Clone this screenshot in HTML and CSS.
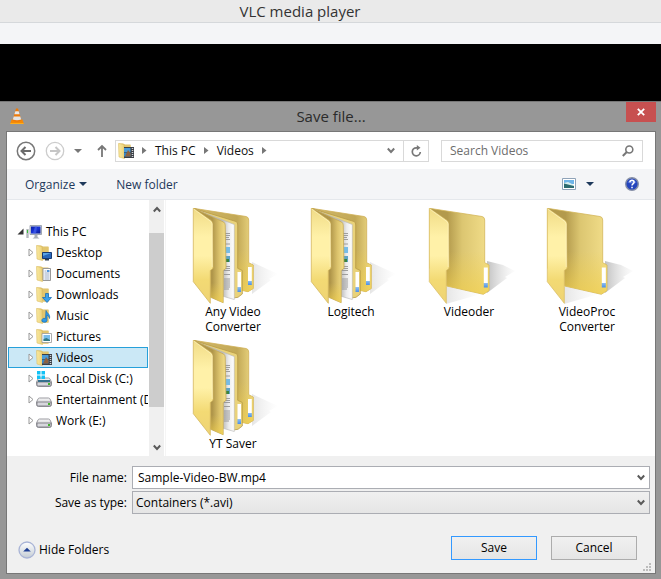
FILE: index.html
```html
<!DOCTYPE html>
<html lang="en">
<head>
<meta charset="utf-8">
<title>VLC media player</title>
<link rel="stylesheet" href="styles.css">
</head>
<body>
<svg class="defs" aria-hidden="true">
  <defs>
    <linearGradient id="gFlap" x1="0" y1="0" x2="0" y2="1"><stop offset="0" stop-color="#f0db86"/><stop offset=".3" stop-color="#fff1a8"/><stop offset=".5" stop-color="#fff1a8"/><stop offset=".75" stop-color="#f3da74"/><stop offset="1" stop-color="#eed374"/></linearGradient>
    <linearGradient id="gMid" x1="0" y1="0" x2="1" y2="0"><stop offset=".58" stop-color="#b0964a"/><stop offset=".8" stop-color="#dcc36c"/><stop offset="1" stop-color="#f4e08c"/></linearGradient>
    <linearGradient id="gBack" x1="0" y1="0" x2="1" y2="0"><stop offset=".3" stop-color="#b39a4c"/><stop offset=".55" stop-color="#dcc671"/><stop offset="1" stop-color="#f3df8b"/></linearGradient>
    <linearGradient id="gRear" x1="0" y1="0" x2="1" y2="0"><stop offset=".2" stop-color="#cdb465"/><stop offset=".73" stop-color="#c2a856"/><stop offset="1" stop-color="#f0db85"/></linearGradient>
    <linearGradient id="gGlow" x1="0" y1="0" x2="0" y2="1"><stop offset=".5" stop-color="#f0cf4d" stop-opacity="0"/><stop offset="1" stop-color="#f0cf4d" stop-opacity=".7"/></linearGradient>
    <linearGradient id="gShadow" x1="0" y1="0" x2="1" y2="0"><stop offset="0" stop-color="#999" stop-opacity=".6"/><stop offset="1" stop-color="#ccc" stop-opacity=".05"/></linearGradient>
    <linearGradient id="gSoft" x1="0" y1="0" x2="1" y2="0"><stop offset="0" stop-color="#aaa" stop-opacity=".3"/><stop offset="1" stop-color="#ccc" stop-opacity="0"/></linearGradient>
    <linearGradient id="gPaper" x1="0" y1="0" x2="1" y2="0"><stop offset=".7" stop-color="#bdbdbd"/><stop offset=".85" stop-color="#ececec"/><stop offset="1" stop-color="#fff"/></linearGradient>
    <linearGradient id="gTag" x1="0" y1="0" x2="0" y2="1"><stop offset=".75" stop-color="#fff"/><stop offset=".76" stop-color="#8fc0f5"/><stop offset="1" stop-color="#4c8fe6"/></linearGradient>
    <linearGradient id="gSmall" x1="0" y1="0" x2="1" y2="0"><stop offset="0" stop-color="#f9e9a0"/><stop offset="1" stop-color="#ecd27a"/></linearGradient>
    <linearGradient id="gDrive" x1="0" y1="0" x2="0" y2="1"><stop offset="0" stop-color="#fafafa"/><stop offset="1" stop-color="#b4b4ba"/></linearGradient>
    <linearGradient id="gScreen" x1="0" y1="0" x2="1" y2="1"><stop offset="0" stop-color="#0a1fa8"/><stop offset=".5" stop-color="#1a35d8"/><stop offset="1" stop-color="#0b1a8c"/></linearGradient>
    <linearGradient id="gRound" x1="0" y1="0" x2="0" y2="1"><stop offset="0" stop-color="#fff"/><stop offset="1" stop-color="#c4ccd4"/></linearGradient>
  </defs>
  <symbol id="chev" viewBox="0 0 8 7"><path d="M.8 1.500 4 5 7.200 1.500" fill="none" stroke="currentColor" stroke-width="2"/></symbol>
  <symbol id="crumb" viewBox="0 0 5 7"><path d="M0 0v7l4.500-3.500z" fill="currentColor"/></symbol>
  <symbol id="down" viewBox="0 0 8 4"><path d="M0 0h8L4 4z" fill="currentColor"/></symbol>
  <symbol id="twist" viewBox="0 0 6 9"><path d="M1 1v7l4-3.500z" fill="#fff" stroke="#989898"/></symbol>
  <symbol id="small" viewBox="0 0 16 16"><path d="M1 .5h4l2 1h5.500v13H7L1 13z" fill="#ddc069"/><path d="M.5.500 6 1.500l.5 14L1 14z" fill="url(#gSmall)" stroke="#dbbd63" stroke-width=".6"/><path d="M7 2h5.500v12.500H7z" fill="#e2c56d"/></symbol>
  <symbol id="film" viewBox="0 0 10 11"><path d="M0 0h10v11H0z" fill="#3b3f45"/><path d="M0 1h6.500v4H0z" fill="#4a9bd8"/><path d="M0 5.500h6.500v4H0z" fill="#3686c6"/><path d="M1 9.500 4 3l2.500 3v3.500z" fill="#8d6240"/><path d="M8.500 1v10" stroke="#cfd3d8" stroke-width="1.500" stroke-dasharray="1 1"/></symbol>
  <symbol id="drive" viewBox="0 0 16 10"><path d="M3.500 1h9q1 0 1.500 1l1.500 3v2.500q0 2-2 2h-11q-2 0-2-2V5L2 2q.5-1 1.500-1z" fill="url(#gDrive)" stroke="#9a9aa0"/><path d="M1 5h14v2.500q0 1.500-1.500 1.500h-11Q1 9 1 7.500z" fill="#d7d7dd" stroke="#7d7d85" stroke-width=".9"/><path d="M12 6h2v2h-2z" fill="#43b52c"/></symbol>
  <symbol id="folder" viewBox="0 0 96 96">
    <path d="M66 53 82 57 94 63 84 69 86 70 66 85z" fill="url(#gShadow)"/>
    <path d="M25 77 60 86 25 96z" fill="url(#gSoft)"/>
    <path d="M8.500.3 61 8.500Q63.700 9 63.700 12V54.700L68 57V82.700L62.300 86.300 25.700 78 8.500 60z" fill="url(#gBack)" stroke="#d3b65a" stroke-width=".8"/>
    <path d="M8.500.3 61 8.500Q63.700 9 63.700 12V54.700L68 57V82.700L62.300 86.300 25.700 78 8.500 60z" fill="url(#gGlow)"/>
    <path d="M62.800 59.500h4v20h-4z" fill="url(#gTag)"/>
    <path d="M8.300.3 26 12.500Q27.500 13.500 27.500 16L28 60.300 25.300 62.500V95.300L8.300 73.700z" fill="url(#gFlap)" stroke="#dcc06a" stroke-width=".8"/>
    <path d="M8.700 1 26 13.500 27.200 16V59" fill="none" stroke="#fff6c4" stroke-width=".7"/>
  </symbol>
  <symbol id="folderFull" viewBox="0 0 96 96">
    <path d="M67 54 93 66 84 71 86 72 67 86z" fill="url(#gSoft)"/>
    <path d="M8.500.3 61 8.500Q63.700 9 63.700 12V54.700L68.300 57V80.500L63 83.700 50 81 30 20z" fill="url(#gRear)" stroke="#cfb057" stroke-width=".8"/>
    <path d="M8.500.3 61 8.500Q63.700 9 63.700 12V54.700L68.300 57V80.500L63 83.700 50 81 30 20z" fill="url(#gGlow)"/>
    <path d="M63 59h3.800v18H63z" fill="url(#gTag)"/>
    <path d="M9 .5 51 13.500Q52.700 14 52.700 17V60.300L57.300 62.500V86L53 89.300 48 90 40 20z" fill="#e9d27a" stroke="#b89b46" stroke-width=".8"/>
    <path d="M52.500 64H56v20h-3.500z" fill="url(#gTag)"/>
    <path d="M12 2 49.300 16.500V91.500L37 88V18z" fill="url(#gPaper)" stroke="#b5b5b5" stroke-width=".6"/>
    <path d="M39 25.500h6M39 27.500h6M39 29.500h5M39 31.500h6M39 36h6M39 58.500h6M39 60.500h6M39 62.500h6M39 66.500h6M39 71h6M39 73h6M39 75h6M39 77h6M39 79h6M39 81h5" stroke="#8c8c8c" stroke-width=".8"/>
    <path d="M40 39h5v6h-5z" fill="#77bce6"/><path d="M40 48h5v6h-5z" fill="#5fa4c4"/><path d="M41 51h3v3h-3z" fill="#39833f"/>
    <path d="M8.500.3 38.500 14Q40 15 40.200 17L41 60.300 38.200 62.500V94.700L25 89V14z" fill="url(#gMid)" stroke="#c6a953" stroke-width=".8"/>
    <path d="M26 55V89l12 5.700V62.500L41 60.300V55z" fill="url(#gGlow)"/>
    <path d="M8.300.3 26 12.500Q27.500 13.500 27.500 16L28 60.300 25.300 62.500V95.300L8.300 73.700z" fill="url(#gFlap)" stroke="#d4b75f" stroke-width=".8"/>
    <path d="M8.700 1 26 13.500 27.200 16V59" fill="none" stroke="#fff6c4" stroke-width=".7"/>
  </symbol>
</svg>

<header class="player-title">VLC media player</header>
<div class="player-menu"></div>
<div class="player-screen"></div>

<main class="dialog">
  <div class="dialog-title">
    <svg class="cone" viewBox="0 0 14 16"><path d="M1.500 11.500h11l1.300 4.200H.2z" fill="#f58a07"/><path d="M.4 15h13.200v1H.2z" fill="#ffae1c"/><path d="M6 .5h2l3.500 12Q7 15 2.500 12.500z" fill="#ee7a08"/><path d="M5.300 3.200h3.400l.9 3H4.400z" fill="#e9e9e9"/><path d="M3.700 8.500h6.600l.9 2.900Q7 13 2.800 11.400z" fill="#e4e4e4"/></svg>
    <h1>Save file...</h1>
    <button class="close" aria-label="Close"><svg viewBox="0 0 8 8"><path d="M.8.800 7.200 7.200M7.200.800.800 7.200" stroke="#fff" stroke-width="1.800"/></svg></button>
  </div>

  <div class="panel">
    <nav class="address-row" aria-label="Location">
      <button class="round" aria-label="Back"><svg viewBox="0 0 20 20"><circle cx="10" cy="10" r="8.700" fill="none" stroke="#777" stroke-width="1.500"/><path d="M15 10H6M9.500 6 5.500 10l4 4" fill="none" stroke="#6b6b6b" stroke-width="2"/></svg></button>
      <button class="round" aria-label="Forward"><svg viewBox="0 0 20 20"><circle cx="10" cy="10" r="8.700" fill="none" stroke="#ccc" stroke-width="1.300"/><path d="M5 10h9M10.500 6l4 4-4 4" fill="none" stroke="#c6c6c6" stroke-width="2"/></svg></button>
      <button class="recent" aria-label="Recent locations"><svg class="down"><use href="#down"/></svg></button>
      <button class="up" aria-label="Up"><svg viewBox="0 0 10 13"><path d="M5 13V2M1 6l4-4 4 4" fill="none" stroke="#777" stroke-width="1.800"/></svg></button>
      <div class="address">
        <svg class="ico" viewBox="0 0 16 16"><use href="#small" width="16" height="16"/><use href="#film" x="6" y="4" width="10" height="11"/></svg>
        <svg class="crumb"><use href="#crumb"/></svg><a href="#">This PC</a>
        <svg class="crumb"><use href="#crumb"/></svg><a href="#">Videos</a>
        <svg class="crumb"><use href="#crumb"/></svg>
        <button class="history" aria-label="Previous locations"><svg class="chev"><use href="#chev"/></svg></button>
        <button class="refresh" aria-label="Refresh"><svg viewBox="0 0 11 12"><path d="M6.500 2.800H5.300A4 4 0 1 0 9.300 7" fill="none" stroke="#777" stroke-width="1.700"/><path d="M5.800 0v5.600L9.500 2.800z" fill="#777"/></svg></button>
      </div>
      <div class="search">
        <input type="search" placeholder="Search Videos" aria-label="Search Videos">
        <svg viewBox="0 0 12 12"><circle cx="7.300" cy="4.500" r="3.500" fill="none" stroke="#777" stroke-width="1.600"/><path d="M4.800 7 .8 11" stroke="#777" stroke-width="2"/></svg>
      </div>
    </nav>

    <div class="toolbar">
      <button class="organize">Organize <svg class="down"><use href="#down"/></svg></button>
      <button>New folder</button>
      <button class="view" aria-label="Change your view"><svg class="pic" viewBox="0 0 14 12"><path d="M.5.500h13v11H.5z" fill="#fff" stroke="#8fa3b8"/><path d="M2 2h10v4H2z" fill="#6db4e8"/><path d="M2 5 6 4l6 3v1H2z" fill="#d8efee"/><path d="M2 5.500 12 8v2H2z" fill="#2c6b70"/></svg></button>
      <button aria-label="More options"><svg class="down"><use href="#down"/></svg></button>
      <button class="help" aria-label="Help"><svg viewBox="0 0 14 14"><circle cx="7" cy="7" r="6.300" fill="#2445bd" stroke="#8790a6" stroke-width="1.400"/><path d="M2.500 5.500a5 5 0 0 1 9 0Q7 7.500 2.500 5.500z" fill="#6f8de6" opacity=".7"/><path d="M4.900 5.300Q5 3.300 7 3.300T9.100 5.200C9.100 6.600 7 6.600 7 8.500M7 9.700v1.600" fill="none" stroke="#fff" stroke-width="1.500"/></svg></button>
    </div>

    <div class="browser">
      <div class="tree-pane">
        <ul class="tree">
          <li class="root"><svg class="open" viewBox="0 0 7 7"><path d="M6.500.5v6h-6z" fill="#333"/></svg><svg class="ico" viewBox="0 0 16 16"><path d="M.3 5h2.400v9H.3z" fill="#b5b9be"/><path d="M1 6h1v3H1z" fill="#39c239"/><path d="M4 1.500h11.500v9H4z" fill="#cfd5dd" stroke="#8d96a3" stroke-width=".8"/><path d="M5 2.500h9.500v7H5z" fill="url(#gScreen)"/><path d="M9 2.500h2l-1 7H7z" fill="#4f6af0" opacity=".6"/><path d="M8.500 11h3v2l2 1.500h-7l2-1.500z" fill="#a9afb8"/></svg>This PC</li>
          <li><svg class="twist"><use href="#twist"/></svg><svg class="ico" viewBox="0 0 16 16"><use href="#small" width="16" height="16"/><path d="M6.500 7.500h9v6h-9z" fill="#2867ba" stroke="#173a73"/><path d="M7 8h8L7 11z" fill="#5ba5e6"/><path d="M9 14h4v1.500H9z" fill="#2b3c55"/></svg>Desktop</li>
          <li><svg class="twist"><use href="#twist"/></svg><svg class="ico" viewBox="0 0 16 16"><use href="#small" width="16" height="16"/><path d="M7 2.500h7.500v12H7z" fill="#fff" stroke="#999"/><path d="M8.500 5h2M8.500 7h5M8.500 9h5M8.500 11h5M8.500 13h5" stroke="#7b93b8" stroke-width=".8"/><path d="M11 4h2.500v2H11z" fill="#4e95dd"/></svg>Documents</li>
          <li><svg class="twist"><use href="#twist"/></svg><svg class="ico" viewBox="0 0 16 16"><use href="#small" width="16" height="16"/><path d="M9.500 6.500h3v4h3l-4.500 5-4.500-5h3z" fill="#3aa1ec" stroke="#1c6fb8" stroke-width=".8"/></svg>Downloads</li>
          <li><svg class="twist"><use href="#twist"/></svg><svg class="ico" viewBox="0 0 16 16"><use href="#small" width="16" height="16"/><path d="M10 2.500c1 3 4.500 3.500 3.500 8-.5-2-1.500-3-2.500-3.500v5.500a2.600 2 0 1 1-1.500-2z" fill="#2e9ae8" stroke="#1b6fb5" stroke-width=".7"/></svg>Music</li>
          <li><svg class="twist"><use href="#twist"/></svg><svg class="ico" viewBox="0 0 16 16"><use href="#small" width="16" height="16"/><path d="M6 4.500h9.500v9H6z" fill="#fff" stroke="#999" stroke-width=".8"/><path d="M7.500 6h6.500v6H7.500z" fill="#79bdeb"/><path d="M7.500 10l3-1 3.500 2v1H7.500z" fill="#327b86"/></svg>Pictures</li>
          <li class="selected"><svg class="twist"><use href="#twist"/></svg><svg class="ico" viewBox="0 0 16 16"><use href="#small" width="16" height="16"/><use href="#film" x="6" y="4" width="10" height="11"/></svg>Videos</li>
          <li><svg class="twist"><use href="#twist"/></svg><svg class="ico" viewBox="0 0 16 16"><use href="#drive" y="6" width="16" height="10"/><path d="M2 9h12v2H2z" fill="#35708c"/><path d="M1 0h3.500v3.500H1zM5.500 0H9v3.500H5.500zM1 4.500h3.500V8H1zM5.500 4.500H9V8H5.500z" fill="#12c1f5"/></svg>Local Disk (C:)</li>
          <li><svg class="twist"><use href="#twist"/></svg><svg class="ico" viewBox="0 0 16 16"><use href="#drive" y="5" width="16" height="10"/></svg>Entertainment (D:)</li>
          <li><svg class="twist"><use href="#twist"/></svg><svg class="ico" viewBox="0 0 16 16"><use href="#drive" y="5" width="16" height="10"/></svg>Work (E:)</li>
          <li class="network"><svg class="globe" viewBox="0 0 10 10"><circle cx="5" cy="5" r="4.500" fill="#3c7fc4"/><path d="M3 1h3L5 3z" fill="#51ab6b"/></svg></li>
        </ul>
        <div class="scrollbar">
          <svg class="chev flip"><use href="#chev"/></svg>
          <div class="thumb"></div>
          <svg class="chev"><use href="#chev"/></svg>
        </div>
      </div>
      <ul class="files">
        <li><svg class="big"><use href="#folderFull"/></svg><span>Any Video Converter</span></li>
        <li><svg class="big"><use href="#folderFull"/></svg><span>Logitech</span></li>
        <li><svg class="big"><use href="#folder"/></svg><span>Videoder</span></li>
        <li><svg class="big"><use href="#folder"/></svg><span>VideoProc Converter</span></li>
        <li><svg class="big"><use href="#folderFull"/></svg><span>YT Saver</span></li>
      </ul>
    </div>

    <form class="fields">
      <label for="name">File name:</label>
      <div class="combo"><input id="name" type="text" value="Sample-Video-BW.mp4"><svg class="chev"><use href="#chev"/></svg></div>
      <label for="type">Save as type:</label>
      <div class="combo"><select id="type"><option>Containers (*.avi)</option></select><svg class="chev"><use href="#chev"/></svg></div>
    </form>

    <footer class="actions">
      <button class="hide"><svg viewBox="0 0 18 18"><circle cx="9" cy="9" r="8" fill="url(#gRound)" stroke="#a9b4d6" stroke-width="1.300"/><path d="M5.200 10.500h7.600L9 6.700z" fill="#1f3f94"/></svg>Hide Folders</button>
      <button class="push primary">Save</button>
      <button class="push">Cancel</button>
      <svg class="grip" viewBox="0 0 9 9"><path d="M6 0h2v2H6zM3 3h2v2H3zM6 3h2v2H6zM0 6h2v2H0zM3 6h2v2H3zM6 6h2v2H6z" fill="#bcbcbc"/></svg>
    </footer>
  </div>
</main>
</body>
</html>
```

FILE: styles.css
```css
* { box-sizing: border-box; }

body {
  margin: 0;
  min-height: 100vh;
  display: flex;
  flex-direction: column;
  background: #979797;
  color: #000;
  font: 12px/15px "Open Sans", "Noto Sans", sans-serif;
}

svg { display: block; flex: none; }
.defs { position: absolute; width: 0; height: 0; }
ul { list-style: none; margin: 0; padding: 0; }

button {
  display: flex;
  align-items: center;
  padding: 0;
  border: 0;
  background: none;
  color: inherit;
  font: inherit;
}

input, select {
  min-width: 0;
  border: 0;
  padding: 0;
  background: none;
  color: inherit;
  font: inherit;
  outline: 0;
}

.ico { width: 16px; height: 16px; }
.chev { width: 8px; height: 7px; color: #5a5a5a; }
.flip { transform: rotate(180deg); }
.down { width: 8px; height: 4px; }
.crumb { width: 5px; height: 7px; color: #777; }
.twist { width: 6px; height: 9px; }

/* Player window behind the dialog */
.player-title {
  height: 23px;
  padding-right: 61px;
  background: #eaeaea;
  border-bottom: 1px solid #d5d8db;
  color: #333;
  font-size: 15px;
  line-height: 23px;
  text-align: center;
}
.player-menu { height: 21px; background: #f4f5f7; }
.player-screen { height: 57px; background: #000; }

/* Dialog frame */
.dialog {
  flex: 1;
  display: flex;
  flex-direction: column;
  padding: 0 5px 5px 6px;
  border-top: 1px solid #777;
}
.dialog-title {
  display: grid;
  grid-template-columns: 30px 1fr 30px;
  height: 29px;
}
.cone { width: 14px; height: 16px; margin: 6px 0 0 4px; }
.dialog-title h1 {
  margin: 0;
  color: #2b2b2b;
  font-size: 15px;
  font-weight: 400;
  line-height: 29px;
  text-align: center;
}
.close {
  height: 20px;
  justify-content: center;
  background: #c75050;
}
.close svg { width: 8px; height: 8px; }

.panel {
  flex: 1;
  display: flex;
  flex-direction: column;
  border: 1px solid #777;
  background: #f0f0f0;
}

/* Address bar */
.address-row {
  display: flex;
  align-items: center;
  height: 37px;
  padding: 0 12px 0 9px;
  background: #fff;
}
.round { margin-right: 9px; }
.round svg { width: 20px; height: 20px; }
.recent { color: #777; margin-right: 15px; }
.up { margin-right: 8px; }
.up svg { width: 10px; height: 13px; }
.address, .search {
  display: flex;
  align-items: center;
  height: 22px;
  min-width: 0;
  border: 1px solid #d9d9d9;
}
.address { flex: 314 1 0; padding-left: 2px; margin-right: 12px; }
.address .crumb { margin: 0 8px; }
.address a { color: #111; text-decoration: none; }
.address .history { margin: 0 8px 0 auto; }
.address .history .chev { color: #777; }
.refresh {
  width: 25px;
  height: 20px;
  justify-content: center;
  border-left: 1px solid #d9d9d9;
}
.refresh svg { width: 11px; height: 12px; }
.search { flex: 0 1 202px; padding: 0 8px; }
.search input { flex: 1; appearance: none; }
.search input::placeholder { color: #6d6d6d; opacity: 1; }
.search svg { width: 12px; height: 12px; }

/* Toolbar */
.toolbar {
  display: flex;
  align-items: center;
  height: 31px;
  padding: 0 16px 0 18px;
  background: #f4f5f7;
  border-bottom: 1px solid #e5e8ec;
  color: #1e395b;
}
.organize { gap: 4px; margin-right: 29px; }
.view { margin: 0 10px 0 auto; }
.pic { width: 14px; height: 12px; }
.help { margin-left: 31px; }
.help svg { width: 14px; height: 14px; }

/* Folder tree and file list */
.browser {
  display: grid;
  grid-template-columns: 159px 1fr;
  height: 256px;
  background: #fff;
}
.tree-pane {
  display: grid;
  grid-template-columns: 1fr 15px;
  min-height: 0;
  padding-right: 1px;
  border-right: 1px solid #f5f5f5;
}
.tree { overflow: hidden; padding: 21px 1px 0 1px; }
.tree li {
  display: flex;
  align-items: center;
  height: 21px;
  padding-left: 20px;
  white-space: nowrap;
  overflow: hidden;
}
.tree .ico { margin: 0 4px 0 2px; }
.tree .root { padding-left: 9px; }
.tree .open { width: 7px; height: 7px; }
.tree .selected {
  padding-left: 19px;
  border: 1px solid #26a0da;
  background: #cbe8f6;
}
.tree .network { margin-top: 21px; }
.globe { width: 10px; height: 10px; }

.scrollbar {
  display: flex;
  flex-direction: column;
  align-items: center;
  padding: 6px 0 5px;
  background: #f0f0f0;
}
.thumb {
  flex: none;
  width: 100%;
  height: 174px;
  margin: 20px 0 auto;
  background: #cdcdcd;
}

.files {
  display: grid;
  grid-template-columns: repeat(auto-fill, 118px);
  align-content: start;
  row-gap: 6px;
  padding: 8px 0 0 8px;
}
.files li {
  display: flex;
  flex-direction: column;
  align-items: center;
  text-align: center;
}
.big { width: 96px; height: 96px; }
.files span { width: 76px; }

/* File name and type */
.fields {
  display: grid;
  grid-template-columns: 120px 1fr;
  align-items: center;
  column-gap: 5px;
  row-gap: 2px;
  padding: 10px 5px 0 0;
}
.fields label { text-align: right; }
.combo {
  display: flex;
  align-items: center;
  height: 23px;
  padding-right: 4px;
  border: 1px solid #abadb3;
  background: #fff;
}
.combo input { flex: 1; padding: 0 5px; }
.combo select { flex: 1; appearance: none; padding: 0 3px; }
.combo:has(select) { background: linear-gradient(#f0f0f0, #e5e5e5); }

/* Bottom buttons */
.actions {
  flex: 1;
  display: flex;
  align-items: center;
  gap: 14px;
  padding: 8px 3px 0 11px;
}
.hide { gap: 3px; margin-right: auto; padding-top: 4px; }
.hide svg { width: 18px; height: 18px; }
.push {
  width: 86px;
  height: 24px;
  justify-content: center;
  border: 1px solid #acacac;
  background: linear-gradient(#f0f0f0, #e5e5e5);
}
.primary { border-color: #3399ff; }
.grip { width: 9px; height: 9px; margin: 0 0 1px -8px; align-self: flex-end; }
```
